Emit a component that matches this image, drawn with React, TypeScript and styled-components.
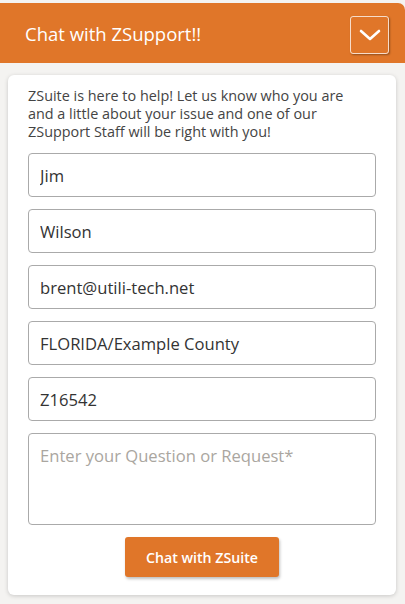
import { createGlobalStyle } from "styled-components";
import styled from "styled-components";

const GlobalStyle = createGlobalStyle`
    html, body {
        margin: 0;
        padding: 0;
        background: #f4f3f1;
        font-family: "Open Sans", "Noto Sans", sans-serif;
    }
    * { box-sizing: border-box; }
`;

const Widget = styled.div`
    width: 405px;
    height: 604px;
    padding-top: 3px;
    display: flex;
    flex-direction: column;
`;

const Header = styled.div`
    height: 60px;
    background-color: #e07629;
    border-top-right-radius: 7px;
    display: flex;
    align-items: center;
    justify-content: space-between;
    padding: 0 16px 0 25px;
`;

const Title = styled.h2`
    margin: 0;
    color: #fff;
    font-size: 18.5px;
    font-weight: 400;
`;

const Toggle = styled.button`
    width: 39px;
    height: 38px;
    background: transparent;
    border: 1px solid rgba(255, 255, 255, 0.75);
    border-radius: 3px;
    box-shadow: 1px 1px 2px rgba(0, 0, 0, 0.35);
    display: flex;
    align-items: center;
    justify-content: center;
    padding: 0;
    margin-top: 4px;
`;

const Card = styled.form`
    margin: 12px 9px 0 8px;
    background: #fff;
    border-radius: 6px;
    box-shadow: 0 1px 4px rgba(0, 0, 0, 0.18);
    padding: 12px 20px 18px 20px;
    display: flex;
    flex-direction: column;
    gap: 12px;
`;

const Intro = styled.p`
    margin: 0;
    padding-right: 14px;
    color: #444;
    font-size: 14.4px;
    line-height: 18px;
`;

const Field = styled.input`
    height: 44px;
    width: 100%;
    border: 1px solid #aaa;
    border-radius: 4px;
    padding: 0 11px;
    font-family: inherit;
    font-size: 16.6px;
    color: #333;
    outline: none;
`;

const Message = styled.textarea`
    height: 92px;
    width: 100%;
    border: 1px solid #aaa;
    border-radius: 4px;
    padding: 10px 11px;
    font-family: inherit;
    font-size: 16.6px;
    color: #333;
    resize: none;
    outline: none;

    &::placeholder {
        color: #aaa6a0;
    }
`;

const Submit = styled.button`
    align-self: center;
    width: 154px;
    height: 40px;
    background-color: #e07629;
    color: #fff;
    border: none;
    border-radius: 3px;
    font-family: inherit;
    font-size: 14.2px;
    font-weight: 600;
    box-shadow: 1px 2px 3px rgba(0, 0, 0, 0.25);
`;

const fields = ["Jim", "Wilson", "brent@utili-tech.net", "FLORIDA/Example County", "Z16542"];

const App = () => {
    return (
        <>
            <GlobalStyle />
            <Widget>
                <Header>
                    <Title>Chat with ZSupport!!</Title>
                    <Toggle type="button">
                        <svg width="22" height="12" viewBox="0 0 22 12" fill="none">
                            <path d="M2 2 L11 10 L20 2" stroke="#fff" strokeWidth="2.6" strokeLinecap="round" strokeLinejoin="round" />
                        </svg>
                    </Toggle>
                </Header>
                <Card onSubmit={(e) => e.preventDefault()}>
                    <Intro>
                        ZSuite is here to help! Let us know who you are and a little about your issue and one of our ZSupport Staff will be right with you!
                    </Intro>
                    {fields.map((value) => (
                        <Field key={value} defaultValue={value} />
                    ))}
                    <Message placeholder="Enter your Question or Request*" />
                    <Submit type="submit">Chat with ZSuite</Submit>
                </Card>
            </Widget>
        </>
    );
};

export default App;
